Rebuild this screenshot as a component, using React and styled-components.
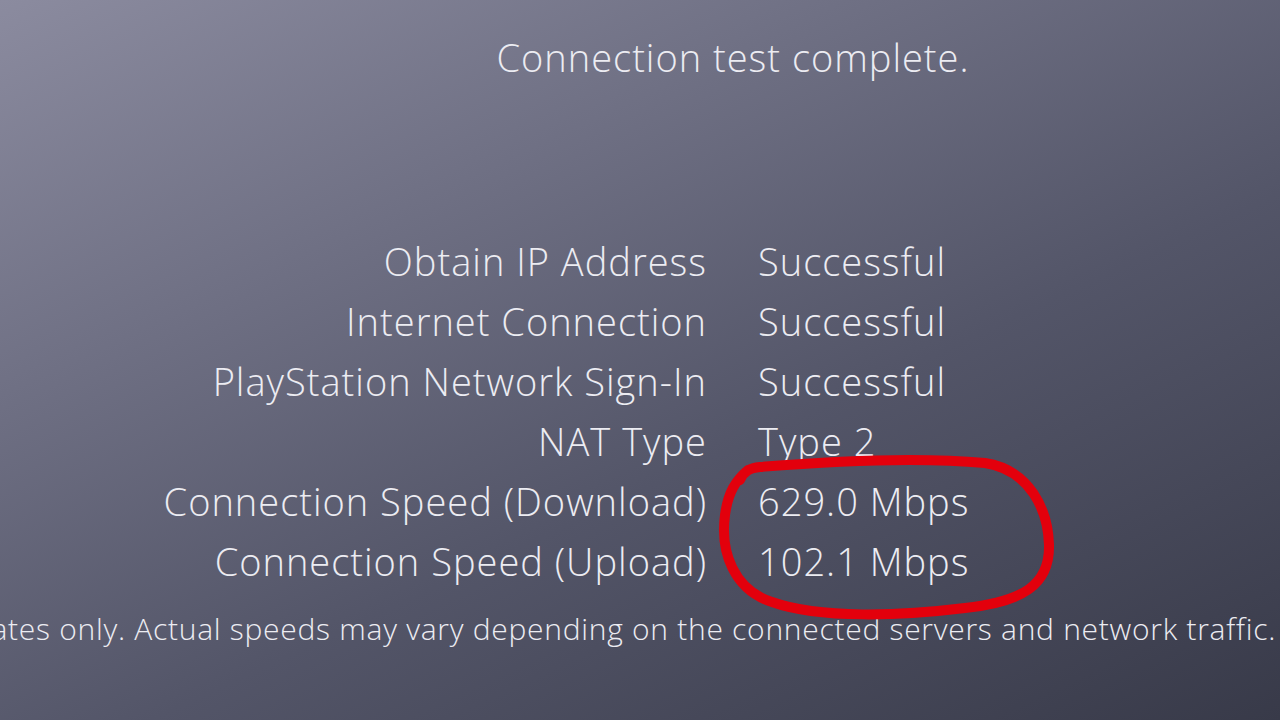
import React from 'react'
import styled, { createGlobalStyle } from 'styled-components';

const Global = createGlobalStyle`
html, body {
    margin:0;
    padding:0;
}
body {
    font-family:"Open Sans", "Noto Sans", sans-serif;
}
`;

const Screen = styled.div`
width:1280px;
height:720px;
position:relative;
overflow:hidden;
background:linear-gradient(155deg, #8b8b9f 0%, #6f7084 30%, #535568 60%, #383a49 100%);
color:#ececf2;
font-weight:300;
display:flex;
flex-direction:column;
`;

const Title = styled.div`
font-size:38px;
letter-spacing:1px;
line-height:50px;
margin-top:32px;
padding-left:186px;
text-align:center;
`;

const Results = styled.div`
display:grid;
grid-template-columns:707px auto;
column-gap:51px;
margin-top:149px;
`;

const Label = styled.div`
font-size:38px;
letter-spacing:1px;
line-height:60px;
text-align:right;
white-space:nowrap;
`;

const Value = styled.div`
font-size:38px;
letter-spacing:1px;
line-height:60px;
white-space:nowrap;
`;

const Footer = styled.div`
display:flex;
justify-content:flex-end;
overflow:hidden;
padding-right:4px;
margin-top:18px;
`;

const Note = styled.div`
font-size:30px;
letter-spacing:0.72px;
line-height:40px;
white-space:nowrap;
flex-shrink:0;
`;

const Marker = styled.svg`
position:absolute;
left:0;
top:0;
pointer-events:none;
`;

const rows = [
    ['Obtain IP Address', 'Successful'],
    ['Internet Connection', 'Successful'],
    ['PlayStation Network Sign-In', 'Successful'],
    ['NAT Type', 'Type 2'],
    ['Connection Speed (Download)', '629.0 Mbps'],
    ['Connection Speed (Upload)', '102.1 Mbps'],
];

export default function App() {
    return (
        <>
            <Global />
            <Screen>
                <Title>Connection test complete.</Title>
                <Results>
                    {rows.map(([label, value]) => (
                        <React.Fragment key={label}>
                            <Label>{label}</Label>
                            <Value>{value}</Value>
                        </React.Fragment>
                    ))}
                </Results>
                <Footer>
                    <Note>Connection speeds are estimates only. Actual speeds may vary depending on the connected servers and network traffic.</Note>
                </Footer>
                <Marker width="1280" height="720" viewBox="0 0 1280 720">
                    <path
                        d="M 740 480 C 744 471, 750 468, 760 467 C 820 462, 910 456, 985 463 C 1030 470, 1048 510, 1049 545 C 1050 585, 1022 602, 965 608 C 900 616, 820 619, 772 602 C 734 590, 720 552, 725 515 C 728 492, 736 480, 748 470"
                        fill="none"
                        stroke="#e3000c"
                        strokeWidth="10"
                        strokeLinecap="round"
                        strokeLinejoin="round"
                    />
                </Marker>
            </Screen>
        </>
    )
}
